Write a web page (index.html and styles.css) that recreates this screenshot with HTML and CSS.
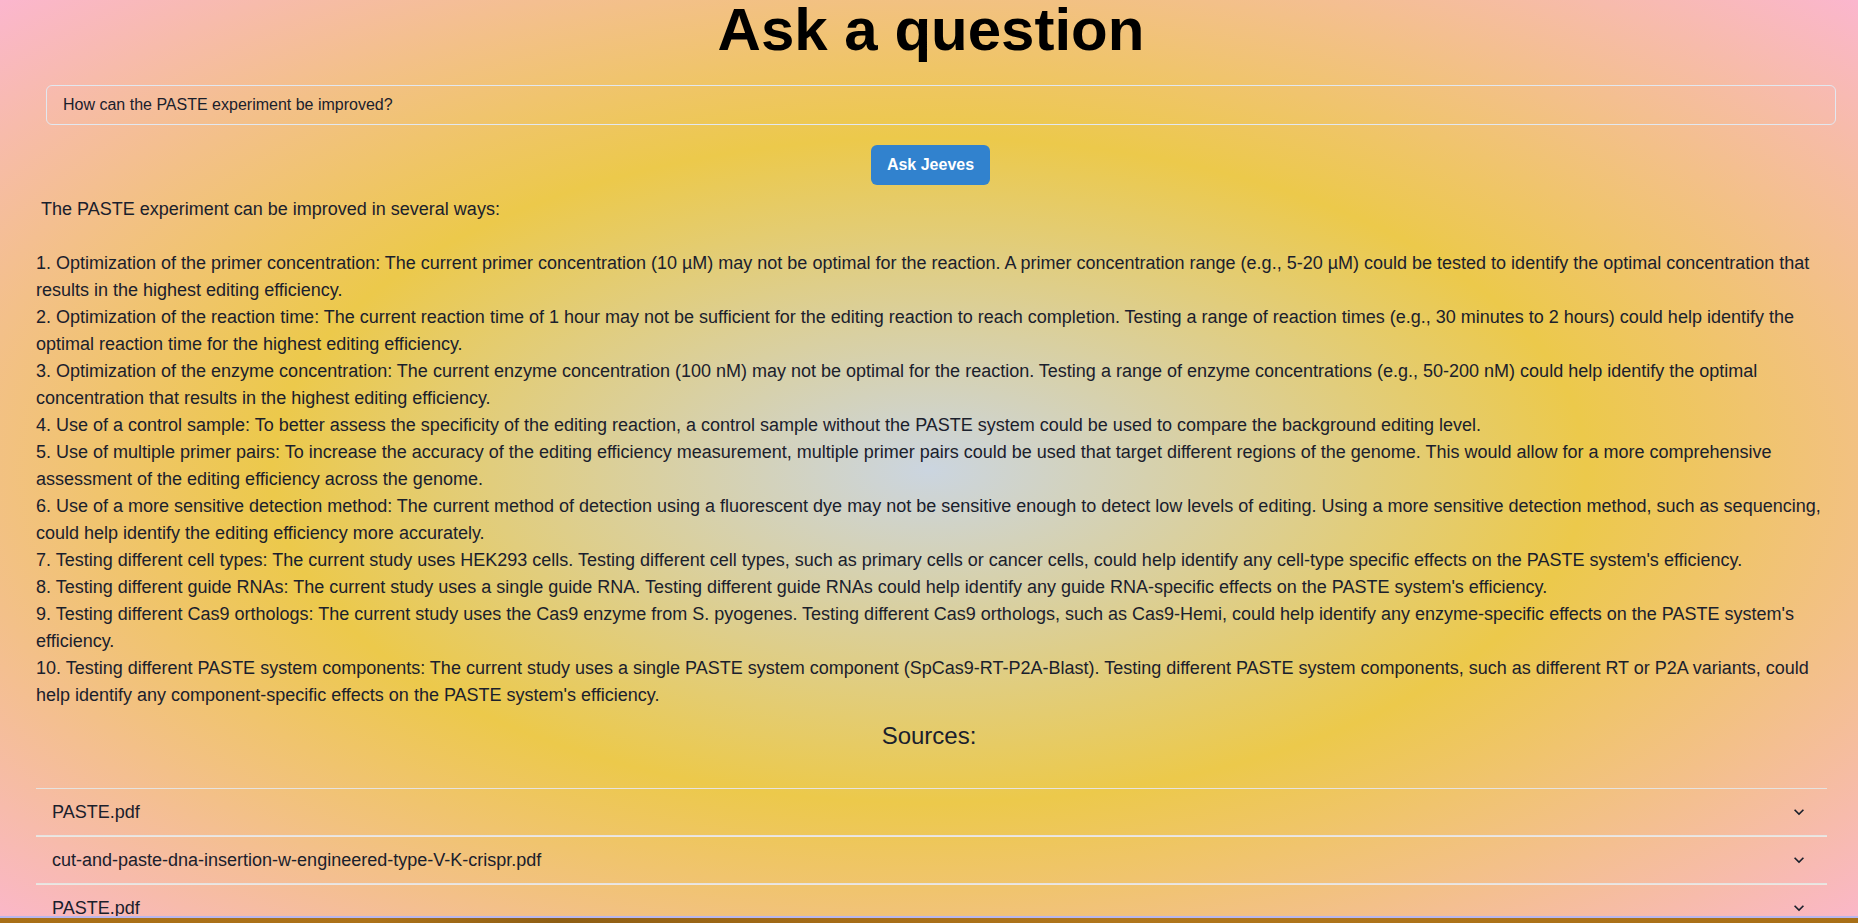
FILE: index.html
```html
<!DOCTYPE html>
<html lang="en">
<head>
<meta charset="utf-8">
<title>Ask a question</title>
<link rel="stylesheet" href="styles.css">
</head>
<body>
<div class="page">
  <h1 class="title">Ask a question</h1>
  <div class="question-wrap">
    <input class="question" type="text" value="How can the PASTE experiment be improved?">
  </div>
  <div class="actions">
    <button class="ask-btn" type="button">Ask Jeeves</button>
  </div>
  <div class="answer"> The PASTE experiment can be improved in several ways:

1. Optimization of the primer concentration: The current primer concentration (10 µM) may not be optimal for the reaction. A primer concentration range (e.g., 5-20 µM) could be tested to identify the optimal concentration that results in the highest editing efficiency.
2. Optimization of the reaction time: The current reaction time of 1 hour may not be sufficient for the editing reaction to reach completion. Testing a range of reaction times (e.g., 30 minutes to 2 hours) could help identify the optimal reaction time for the highest editing efficiency.
3. Optimization of the enzyme concentration: The current enzyme concentration (100 nM) may not be optimal for the reaction. Testing a range of enzyme concentrations (e.g., 50-200 nM) could help identify the optimal concentration that results in the highest editing efficiency.
4. Use of a control sample: To better assess the specificity of the editing reaction, a control sample without the PASTE system could be used to compare the background editing level.
5. Use of multiple primer pairs: To increase the accuracy of the editing efficiency measurement, multiple primer pairs could be used that target different regions of the genome. This would allow for a more comprehensive assessment of the editing efficiency across the genome.
6. Use of a more sensitive detection method: The current method of detection using a fluorescent dye may not be sensitive enough to detect low levels of editing. Using a more sensitive detection method, such as sequencing, could help identify the editing efficiency more accurately.
7. Testing different cell types: The current study uses HEK293 cells. Testing different cell types, such as primary cells or cancer cells, could help identify any cell-type specific effects on the PASTE system's efficiency.
8. Testing different guide RNAs: The current study uses a single guide RNA. Testing different guide RNAs could help identify any guide RNA-specific effects on the PASTE system's efficiency.
9. Testing different Cas9 orthologs: The current study uses the Cas9 enzyme from S. pyogenes. Testing different Cas9 orthologs, such as Cas9-Hemi, could help identify any enzyme-specific effects on the PASTE system's efficiency.
10. Testing different PASTE system components: The current study uses a single PASTE system component (SpCas9-RT-P2A-Blast). Testing different PASTE system components, such as different RT or P2A variants, could help identify any component-specific effects on the PASTE system's efficiency.</div>
  <h2 class="sources-title">Sources:</h2>
  <div class="accordion">
    <div class="acc-item">
      <button class="acc-btn" type="button"><span class="acc-label">PASTE.pdf</span><svg class="chev" viewBox="0 0 24 24"><path d="M16.59 8.59L12 13.17 7.41 8.59 6 10l6 6 6-6z"/></svg></button>
    </div>
    <div class="acc-item">
      <button class="acc-btn" type="button"><span class="acc-label">cut-and-paste-dna-insertion-w-engineered-type-V-K-crispr.pdf</span><svg class="chev" viewBox="0 0 24 24"><path d="M16.59 8.59L12 13.17 7.41 8.59 6 10l6 6 6-6z"/></svg></button>
    </div>
    <div class="acc-item">
      <button class="acc-btn" type="button"><span class="acc-label">PASTE.pdf</span><svg class="chev" viewBox="0 0 24 24"><path d="M16.59 8.59L12 13.17 7.41 8.59 6 10l6 6 6-6z"/></svg></button>
    </div>
  </div>
</div>
<div class="footer-strip"></div>
</body>
</html>
```
FILE: styles.css
```css
html, body {
  margin: 0;
  padding: 0;
}

body {
  font-family: "Liberation Sans", Arial, sans-serif;
  color: #1A202C;
  background: #A8701A;
  overflow: hidden;
}

.page {
  height: 916px;
  overflow: hidden;
  background: radial-gradient(ellipse 1314px 665px at 50% 470px, #CBD5E0 0%, #ECC94B 50%, #FBB6CE 100%);
}

.title {
  margin: 0;
  padding: 0 0 0 4px;
  font-size: 60px;
  line-height: 60px;
  font-weight: 700;
  text-align: center;
  color: #000;
}

.question-wrap {
  margin: 25px 22px 0 46px;
}

.question {
  display: block;
  box-sizing: border-box;
  width: 100%;
  height: 40px;
  padding: 0 16px;
  border: 1px solid #E2E8F0;
  border-radius: 6px;
  background: transparent;
  font-family: inherit;
  font-size: 16px;
  color: #1A202C;
  outline: none;
}

.actions {
  display: flex;
  justify-content: center;
  margin-top: 20px;
  padding-left: 3px;
}

.ask-btn {
  height: 40px;
  padding: 0 16px;
  border: none;
  border-radius: 6px;
  background: #3182CE;
  color: #fff;
  font-family: inherit;
  font-size: 16px;
  font-weight: 700;
}

.answer {
  margin: 11px 36px 0 36px;
  font-size: 18px;
  line-height: 27px;
  white-space: pre-wrap;
}

.sources-title {
  margin: 9px 0 0 0;
  font-size: 24px;
  line-height: 36px;
  font-weight: 400;
  text-align: center;
}

.accordion {
  margin: 34px 31px 0 36px;
}

.acc-item {
  border-top: 1px solid #E6E3E0;
  border-bottom: 1px solid #E6E3E0;
}

.acc-item + .acc-item {
  border-top-color: #EDE7E2;
}

.acc-btn {
  display: flex;
  align-items: center;
  width: 100%;
  height: 46px;
  padding: 0 18px 0 16px;
  border: none;
  background: transparent;
  font-family: inherit;
  font-size: 18px;
  color: #1A202C;
  text-align: left;
}

.acc-label {
  flex: 1;
}

.chev {
  width: 20px;
  height: 20px;
  fill: #1A202C;
}

.footer-strip {
  height: 7px;
  border-top: 2px solid #B8B6EE;
  background: linear-gradient(90deg, #A86F17 0%, #AC7219 20%, #8E5E14 30%, #A56C17 45%, #B0761C 60%, #A86F17 100%);
}
```
